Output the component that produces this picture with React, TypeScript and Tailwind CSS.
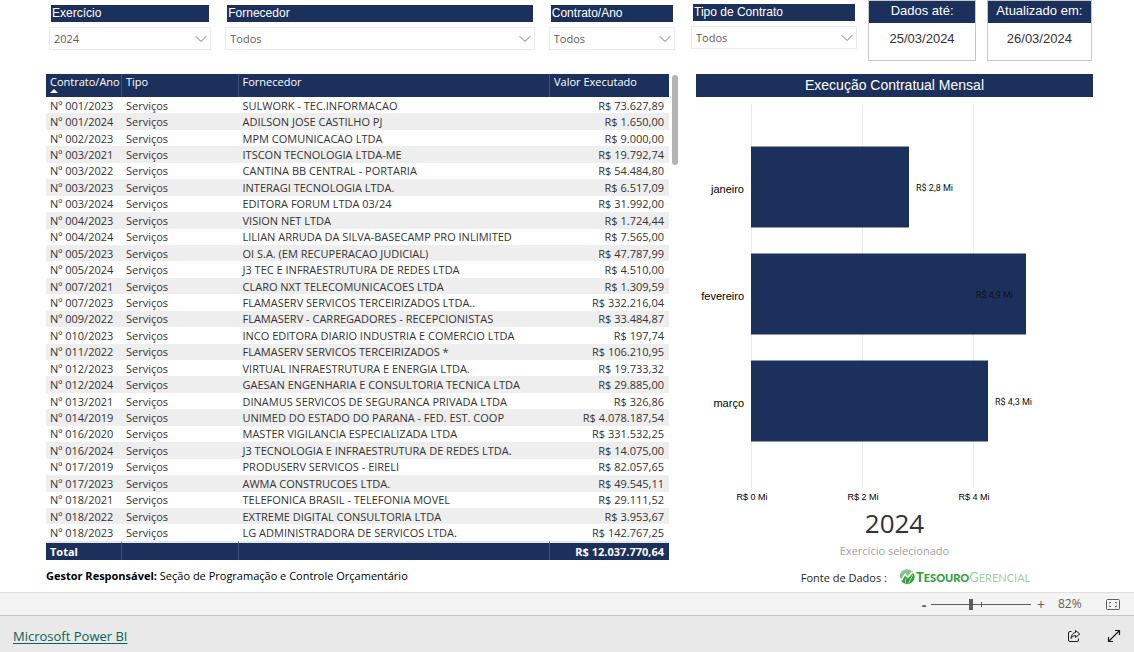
import React from "react";

type Row = [string, string, string];

const rows: Row[] = [
  ["001/2023", "SULWORK - TEC.INFORMACAO", "73.627,89"],
  ["001/2024", "ADILSON JOSE CASTILHO PJ", "1.650,00"],
  ["002/2023", "MPM COMUNICACAO LTDA", "9.000,00"],
  ["003/2021", "ITSCON TECNOLOGIA LTDA-ME", "19.792,74"],
  ["003/2022", "CANTINA BB CENTRAL - PORTARIA", "54.484,80"],
  ["003/2023", "INTERAGI TECNOLOGIA LTDA.", "6.517,09"],
  ["003/2024", "EDITORA FORUM LTDA 03/24", "31.992,00"],
  ["004/2023", "VISION NET LTDA", "1.724,44"],
  ["004/2024", "LILIAN ARRUDA DA SILVA-BASECAMP PRO INLIMITED", "7.565,00"],
  ["005/2023", "OI S.A. (EM RECUPERACAO JUDICIAL)", "47.787,99"],
  ["005/2024", "J3 TEC E INFRAESTRUTURA DE REDES LTDA", "4.510,00"],
  ["007/2021", "CLARO NXT TELECOMUNICACOES LTDA", "1.309,59"],
  ["007/2023", "FLAMASERV SERVICOS TERCEIRIZADOS LTDA..", "332.216,04"],
  ["009/2022", "FLAMASERV - CARREGADORES - RECEPCIONISTAS", "33.484,87"],
  ["010/2023", "INCO EDITORA DIARIO INDUSTRIA E COMERCIO LTDA", "197,74"],
  ["011/2022", "FLAMASERV SERVICOS TERCEIRIZADOS *", "106.210,95"],
  ["012/2023", "VIRTUAL INFRAESTRUTURA E ENERGIA LTDA.", "19.733,32"],
  ["012/2024", "GAESAN ENGENHARIA E CONSULTORIA TECNICA LTDA", "29.885,00"],
  ["013/2021", "DINAMUS SERVICOS DE SEGURANCA PRIVADA LTDA", "326,86"],
  ["014/2019", "UNIMED DO ESTADO DO PARANA - FED. EST. COOP", "4.078.187,54"],
  ["016/2020", "MASTER VIGILANCIA ESPECIALIZADA LTDA", "331.532,25"],
  ["016/2024", "J3 TECNOLOGIA E INFRAESTRUTURA DE REDES LTDA.", "14.075,00"],
  ["017/2019", "PRODUSERV SERVICOS - EIRELI", "82.057,65"],
  ["017/2023", "AWMA CONSTRUCOES LTDA.", "49.545,11"],
  ["018/2021", "TELEFONICA BRASIL - TELEFONIA MOVEL", "29.111,52"],
  ["018/2022", "EXTREME DIGITAL CONSULTORIA LTDA", "3.953,67"],
  ["018/2023", "LG ADMINISTRADORA DE SERVICOS LTDA.", "142.767,25"],
];

function Filter({ id, label, value }: { id: string; label: string; value: string }) {
  return (
    <div className="flex min-w-0 flex-col">
      <label
        htmlFor={id}
        className="mx-0.5 block h-[17px] bg-[#1c305c] pl-px font-['Liberation_Sans',sans-serif] text-[12px] leading-[17px] text-white"
      >
        {label}
      </label>
      <div className="relative mt-[5px]">
        <select
          id={id}
          className="block h-[23px] w-full appearance-none border border-[#eaeaea] bg-white pl-[4px] pt-0.5 text-[11px] text-[#605e5c]"
        >
          <option>{value}</option>
        </select>
        <svg
          className="pointer-events-none absolute right-[4px] top-[8px]"
          width="12"
          height="8"
          viewBox="0 0 12 8"
          fill="none"
          stroke="#76736f"
        >
          <path d="M0.7 1.2 6 6.5 11.3 1.2" />
        </svg>
      </div>
    </div>
  );
}

function DateCard({ title, date }: { title: string; date: string }) {
  return (
    <div className="h-[61px] border border-[#c8c8c8] text-center font-['Liberation_Sans',sans-serif] text-[13px]">
      <div className="h-[22px] bg-[#1c305c] leading-[20px] text-white">{title}</div>
      <div className="leading-[32px] text-[#333]">{date}</div>
    </div>
  );
}

function ContractsTable() {
  const rule = "border-r border-[#40517a]";
  const totalCell = "border-t-2 border-t-[#e4e6ea] bg-[#1c305c]";
  const totalRule = "border-r border-r-[#40517a]";
  return (
    <table className="h-[486px] min-w-0 flex-1 table-fixed border-separate border-spacing-0 text-[11px] leading-[15px] text-[#333]">
      <colgroup>
        <col className="w-[12.2%]" />
        <col className="w-[18.7%]" />
        <col className="w-[50%]" />
        <col className="w-[19.1%]" />
      </colgroup>
      <thead>
        <tr className="h-[23px] bg-[#1c305c] text-left align-top leading-[16px] text-white">
          <th className={"pl-1 font-normal " + rule}>
            <span className="block h-[15px] whitespace-nowrap">Contrato/Ano</span>
            <svg className="block" width="8" height="4" viewBox="0 0 8 4">
              <path d="M0 4 4 0 8 4Z" fill="#fff" />
            </svg>
          </th>
          <th className={"pl-1 font-normal " + rule}>Tipo</th>
          <th className={"pl-1 font-normal " + rule}>Fornecedor</th>
          <th className="pl-1 font-normal">Valor Executado</th>
        </tr>
      </thead>
      <tbody>
        {rows.map(([n, supplier, amount]) => (
          <tr key={n} className="even:bg-[#eeeeee]">
            <td className="whitespace-nowrap pl-1">Nº {n}</td>
            <td className="pl-1">Serviços</td>
            <td className="whitespace-nowrap pl-1">{supplier}</td>
            <td className="whitespace-nowrap pr-[5px] text-right">R$ {amount}</td>
          </tr>
        ))}
      </tbody>
      <tfoot>
        <tr className="h-[19px] font-bold text-white">
          <td className={"pl-1 " + totalCell + " " + totalRule}>Total</td>
          <td className={totalCell + " " + totalRule} />
          <td className={totalCell + " " + totalRule} />
          <td className={"whitespace-nowrap pr-[5px] text-right " + totalCell}>R$ 12.037.770,64</td>
        </tr>
      </tfoot>
    </table>
  );
}

const bars = [
  { month: "janeiro", width: 158, label: "R$ 2,8 Mi", inside: false },
  { month: "fevereiro", width: 275, label: "R$ 4,9 Mi", inside: true },
  { month: "março", width: 237, label: "R$ 4,3 Mi", inside: false },
];

function MonthlyChart() {
  return (
    <svg className="block w-full" viewBox="0 0 397 408" role="img" aria-label="Execução Contratual Mensal">
      {[0, 2, 4].map((v, i) => (
        <g key={v}>
          <path d={`M${55.5 + i * 111} 7V391`} stroke="#ebebeb" />
          <text
            x={56 + i * 111}
            y="403"
            textAnchor="middle"
            className="fill-black font-['Liberation_Sans',sans-serif] text-[9px]"
          >
            R$ {v} Mi
          </text>
        </g>
      ))}
      {bars.map((b, i) => (
        <g key={b.month}>
          <rect x="55" y={49.5 + i * 107} width={b.width} height="81" fill="#1c305c" />
          <text
            x="48"
            y={96 + i * 107}
            textAnchor="end"
            className="fill-black font-['Liberation_Sans',sans-serif] text-[11px]"
          >
            {b.month}
          </text>
          <text
            x={b.inside ? 55 + b.width - 13 : 55 + b.width + 7}
            y={94 + i * 107}
            textAnchor={b.inside ? "end" : "start"}
            className="fill-[#111] font-['Roboto',sans-serif] text-[9px]"
          >
            {b.label}
          </text>
        </g>
      ))}
    </svg>
  );
}

function TesouroLogo() {
  return (
    <span className="flex items-center gap-px font-['Lato',sans-serif] leading-[16px]">
      <svg width="16" height="16" viewBox="0 0 16 16">
        <circle cx="8" cy="7.5" r="7.3" fill="#86c583" />
        <path d="M1.2 10.5 3.2 12 6.6 6.5 8.7 9.500 14.800 4.500A7.300 7.300 0 0 1 4 13.600Z" fill="#2f9e3c" />
        <path d="M0.8 9.600 2.600 10.800 6.200 5.200 8.600 8.400 13.400 3" fill="none" stroke="#fff" strokeWidth="1.3" />
        <path d="M6.500 14.500V9.500M9.200 14.800 13.800 6" fill="none" stroke="#d5ecd3" strokeWidth="0.8" />
      </svg>
      <span>
        <span className="text-[13px] font-black text-[#2f9e3c]">
          T<span className="text-[11px]">ESOURO</span>
        </span>
        <span className="text-[13px] text-[#9fd09c]">
          G<span className="text-[11px]">ERENCIAL</span>
        </span>
      </span>
    </span>
  );
}

export default function App() {
  return (
    <div className="flex min-h-screen flex-col bg-white font-['Open_Sans','Noto_Sans',sans-serif]">
      <main className="flex-1 pl-[46px] pr-[41px]">
        <div className="grid h-[74px] grid-cols-[632fr_397fr] gap-[18px]">
          <div className="grid grid-cols-[162fr_309fr_126fr] content-start gap-[14px] px-[3px] pt-[5px]">
            <Filter id="exercicio" label="Exercício" value="2024" />
            <Filter id="fornecedor" label="Fornecedor" value="Todos" />
            <Filter id="contrato" label="Contrato/Ano" value="Todos" />
          </div>
          <div className="-ml-[5px] grid grid-cols-[166fr_107fr_105fr] content-start gap-[11px] pr-px">
            <div className="pt-1">
              <Filter id="tipo" label="Tipo de Contrato" value="Todos" />
            </div>
            <DateCard title="Dados até:" date="25/03/2024" />
            <DateCard title="Atualizado em:" date="26/03/2024" />
          </div>
        </div>

        <div className="grid grid-cols-[632fr_397fr] gap-[18px]">
          <section>
            <div className="flex gap-[3px]">
              <ContractsTable />
              <div className="mt-px h-[90px] w-[6px] rounded-full bg-[#b3b3b3]" />
            </div>
            <p className="pt-2 text-[11px] leading-[16px] text-black">
              <strong>Gestor Responsável:</strong> Seção de Programação e Controle Orçamentário
            </p>
          </section>

          <section>
            <h2 className="h-[23px] bg-[#1c305c] text-center font-['Liberation_Sans',sans-serif] text-[14px] leading-[23px] text-white">
              Execução Contratual Mensal
            </h2>
            <MonthlyChart />
            <div className="text-center">
              <div className="text-[26px] leading-[36px] text-[#333]">2024</div>
              <div className="text-[11px] leading-[20px] text-[#a0a0a0]">Exercício selecionado</div>
            </div>
            <div className="flex items-center justify-center gap-[12px] pl-[42px] pt-[6px]">
              <span className="pt-0.5 text-[11px] leading-[18px] text-[#252423]">Fonte de Dados :</span>
              <TesouroLogo />
            </div>
          </section>
        </div>
      </main>

      <div className="flex h-[23px] items-center justify-end border-t border-[#dedede] bg-[#f4f4f4] pr-[14px] text-[12px] text-[#605e5c]">
        <button type="button" aria-label="Reduzir" className="w-[14px] text-[14px] font-bold">
          -
        </button>
        <div className="relative flex h-[12px] w-[100px] items-center">
          <span className="absolute left-[50px] h-[5px] w-px bg-[#605e5c]" />
          <input
            type="range"
            aria-label="Zoom"
            min={0}
            max={100}
            defaultValue={40}
            className="h-px w-full appearance-none bg-[#605e5c] [&::-webkit-slider-thumb]:h-[11px] [&::-webkit-slider-thumb]:w-[4px] [&::-webkit-slider-thumb]:appearance-none [&::-webkit-slider-thumb]:bg-[#605e5c]"
          />
        </div>
        <button type="button" aria-label="Ampliar" className="w-[20px] text-[14px]">
          +
        </button>
        <span className="ml-[7px] w-[48px]">82%</span>
        <button type="button" aria-label="Ajustar à página">
          <svg width="14" height="11" viewBox="0 0 14 11" fill="none" stroke="#605e5c">
            <rect x="0.5" y="0.5" width="13" height="10" rx="1" />
            <path d="M3.500 4.500V3.500H5M9 3.500H10.500V4.500M10.500 6.500V7.500H9M5 7.500H3.500V6.500" />
          </svg>
        </button>
      </div>

      <footer className="flex h-[37px] items-center justify-between border-t border-[#c6c6c6] bg-[#e9e9e9] px-[13px] pt-1">
        <a href="#" className="text-[13px] font-medium leading-[18px] text-[#0b6358] underline underline-offset-2">
          Microsoft Power BI
        </a>
        <div className="flex items-center gap-[26px]">
          <button type="button" aria-label="Compartilhar">
            <svg width="14" height="14" viewBox="0 0 14 14" fill="none" stroke="#1b1a19">
              <path d="M4.500 2.500H3A1.500 1.500 0 0 0 1.500 4V11A1.500 1.500 0 0 0 3 12.500H10A1.500 1.500 0 0 0 11.500 11V9.500" />
              <path d="M8.500 1.500 12.800 5 8.500 8.500V6.500C6.500 6.500 5 7.500 4 9.500 4.200 6.500 5.500 4 8.500 3.500Z" />
            </svg>
          </button>
          <button type="button" aria-label="Tela cheia">
            <svg width="14" height="14" viewBox="0 0 14 14" fill="none" stroke="#1b1a19" strokeWidth="1.2">
              <path d="M1.500 12.500 12.500 1.500M8 1.500H12.500V6M1.500 8V12.500H6" />
            </svg>
          </button>
        </div>
      </footer>
    </div>
  );
}
